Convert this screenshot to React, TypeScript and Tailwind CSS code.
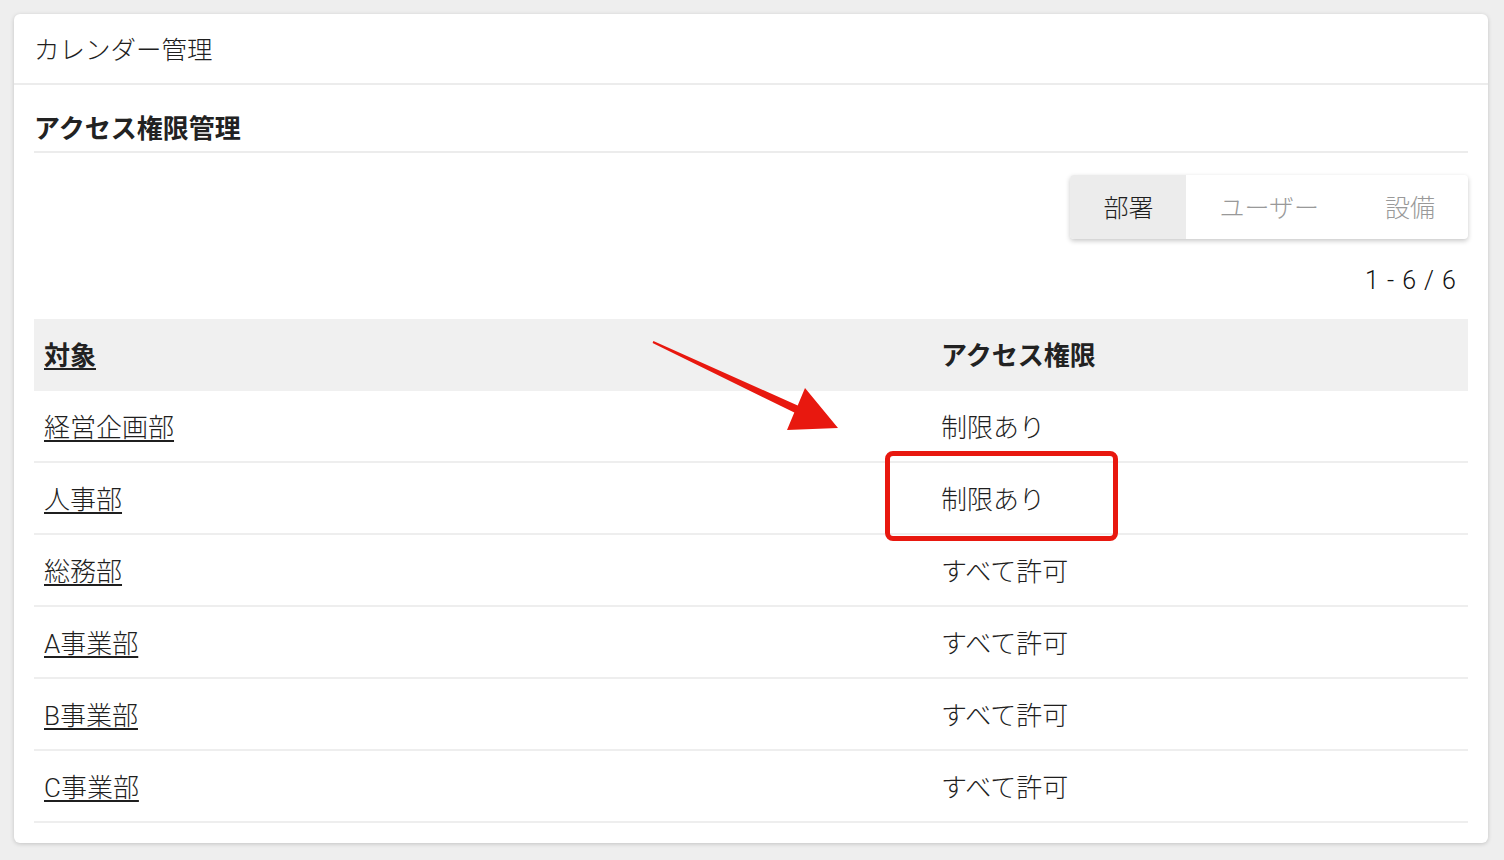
import React from "react";

const rows = [
  { name: "経営企画部", access: "制限あり" },
  { name: "人事部", access: "制限あり" },
  { name: "総務部", access: "すべて許可" },
  { name: "A事業部", access: "すべて許可" },
  { name: "B事業部", access: "すべて許可" },
  { name: "C事業部", access: "すべて許可" },
];

const tabs = ["部署", "ユーザー", "設備"];

export default function App() {
  return (
    <div
      className="min-h-[860px] bg-[#eeeeee] pl-[14px] pr-[16px] pt-[14px] pb-[17px]"
      style={{ fontFamily: "Roboto, 'Noto Sans CJK JP', sans-serif" }}
    >
      <div className="relative rounded-[6px] bg-white shadow-[0_1px_4px_rgba(0,0,0,0.18)]">
        {/* Card header */}
        <div className="flex h-[71px] items-center border-b-2 border-[#ececec] px-[20px] pt-[4px] text-[25.5px] font-light text-[#1f1f1f]">
          カレンダー管理
        </div>

        <div className="px-[20px] pb-[20px]">
          <div className="flex h-[68px] items-end border-b-2 border-[#ececec] pb-[2px] text-[26px] font-bold text-[#222]">
            アクセス権限管理
          </div>

          {/* Toggle */}
          <div className="mt-[22px] flex justify-end">
            <div className="flex h-[64px] overflow-hidden rounded-[4px] bg-white shadow-[0_2px_5px_rgba(0,0,0,0.22)]">
              {tabs.map((t, i) => (
                <div
                  key={t}
                  className={
                    i === 0
                      ? "flex items-center bg-[#ececec] px-[33px] pt-[3px] text-[25px] font-light text-[#1f1f1f]"
                      : "flex items-center px-[33px] pt-[3px] text-[25px] font-light text-[#999]"
                  }
                >
                  {t}
                </div>
              ))}
            </div>
          </div>

          <div className="flex h-[80px] items-center justify-end pt-[4px] pr-[11px] text-[25px] font-light tracking-[1px] text-[#111]">
            1 - 6 / 6
          </div>

          {/* Table */}
          <div className="text-[26px]">
            <div className="grid h-[72px] grid-cols-[896px_1fr] items-center bg-[#f0f0f0] pt-[2px] font-bold text-[#222]">
              <div className="pl-[10px]">
                <span className="underline decoration-2 underline-offset-[3px]">対象</span>
              </div>
              <div className="pl-[11px]">アクセス権限</div>
            </div>
            {rows.map((r) => (
              <div
                key={r.name}
                className="grid h-[72px] grid-cols-[896px_1fr] items-center border-b-2 border-[#eeeeee] pt-[4px] font-light text-[#1f1f1f]"
              >
                <div className="pl-[10px]">
                  <span className="underline decoration-2 underline-offset-[3px]">{r.name}</span>
                </div>
                <div className="pl-[11px]">{r.access}</div>
              </div>
            ))}
          </div>
        </div>

        {/* Annotation: arrow */}
        <svg
          className="pointer-events-none absolute left-0 top-0"
          width="1474"
          height="829"
          viewBox="0 0 1474 829"
        >
          <polygon
            points="639.4,327.1 783.7,391.4 791,374 824,414 773,416 780.3,398.6 638.6,328.9"
            fill="#e8180f"
          />
        </svg>

        {/* Annotation: highlight box */}
        <div className="pointer-events-none absolute left-[871px] top-[437px] h-[90px] w-[233px] rounded-[8px] border-[5px] border-[#e8180f]" />
      </div>
    </div>
  );
}
